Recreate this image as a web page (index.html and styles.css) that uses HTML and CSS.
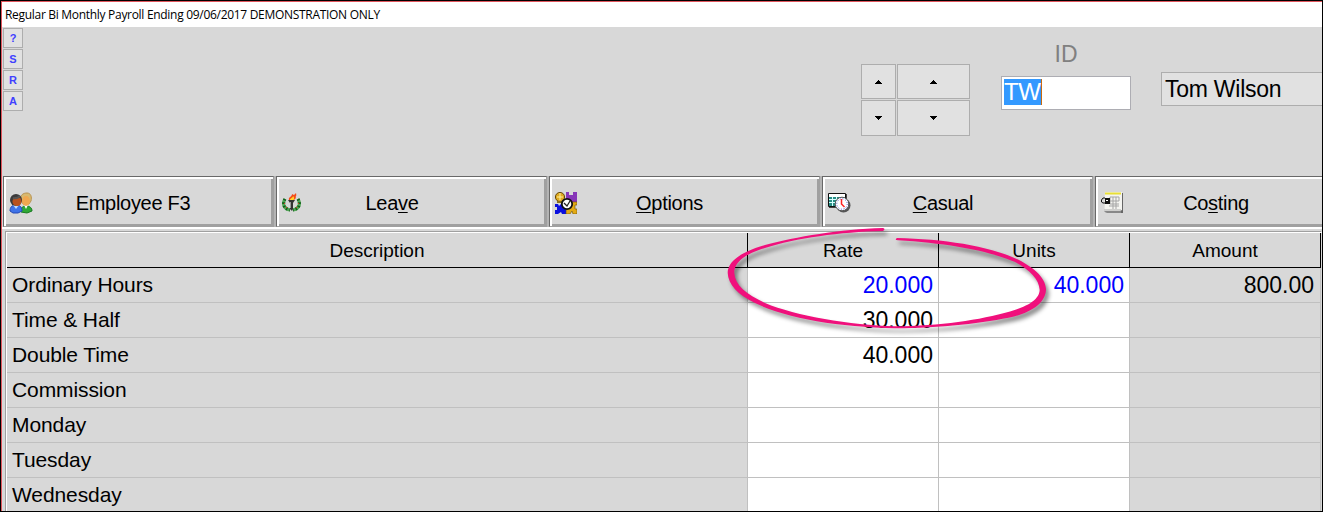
FILE: index.html
```
<!DOCTYPE html>
<html lang="en">
  <head>
    <meta charset="UTF-8" />
    <title>Regular Bi Monthly Payroll</title>
    <link rel="stylesheet" href="styles.css">
  </head>
  <body>
    <div class="window">
      <div class="title-bar"><span class="title">Regular Bi Monthly Payroll Ending 09/06/2017 DEMONSTRATION ONLY</span></div>

      <div class="top-panel">
        <div class="side-buttons">
          <button class="mini-btn">?</button>
          <button class="mini-btn">S</button>
          <button class="mini-btn">R</button>
          <button class="mini-btn">A</button>
        </div>
        <div class="nav-buttons">
          <button class="nav-btn"><svg width="7" height="4"><path d="M3 0h1v1h1v1h1v1h1v1H0V3h1V2h1V1h1z" /></svg></button>
          <button class="nav-btn"><svg width="7" height="4"><path d="M3 0h1v1h1v1h1v1h1v1H0V3h1V2h1V1h1z" /></svg></button>
          <button class="nav-btn"><svg width="7" height="4"><path d="M0 0h7v1H6v1H5v1H4v1H3V3H2V2H1V1H0z" /></svg></button>
          <button class="nav-btn"><svg width="7" height="4"><path d="M0 0h7v1H6v1H5v1H4v1H3V3H2V2H1V1H0z" /></svg></button>
        </div>
        <div class="id-field">
          <div class="id-label">ID</div>
          <div class="id-input"><span class="selected">TW</span></div>
        </div>
        <div class="name-box">Tom Wilson</div>
      </div>

      <!-- Tabs -->
      <div class="tabs">
        <div class="tab">
          <svg class="icon" width="24" height="22" viewBox="0 0 24 22">
            <path d="M12 20c0-4 1-6 5-6s6 2 6 5l-5 2z" fill="#2fa836" stroke="#177a20" />
            <path d="M15 13l2 4 2-4z" fill="#fff" />
            <path d="M12 8c-1-5 2-7 6-7s5 4 4 8l-2 3h-6z" fill="#d8b970" stroke="#b89250" />
            <ellipse cx="17" cy="9" rx="4" ry="5" fill="#f0a850" />
            <path d="M1 19c0-4 2-6 6-6s6 2 6 6l-4 2H4z" fill="#3f73e8" stroke="#2449b5" />
            <path d="M4 13l3 4 3-4z" fill="#bddcff" />
            <ellipse cx="7" cy="8" rx="6" ry="6" fill="#3b3b3b" />
            <ellipse cx="8" cy="9.500" rx="4.500" ry="4.500" fill="#b9521e" />
            <path d="M4 6c3 1 5 0 7-2" fill="none" stroke="#555" stroke-width="2" />
          </svg>
          <span class="tab-label">Employee F3</span>
        </div>
        <div class="tab">
          <svg class="icon" width="20" height="20" viewBox="0 0 20 20">
            <g fill="none">
              <path d="M3 6c-3 5-1 10 5 11M16 6c3 5 1 10-5 11" stroke="#4fa653" stroke-width="3.2" />
              <path d="M3 6c-3 5-1 10 5 11M16 6c3 5 1 10-5 11" stroke="#135f1c" stroke-width="3" stroke-dasharray="1.5 2" />
              <path d="M2 10l1 1M4 14l1 1M17 10l-1 1M15 14l-1 1" stroke="#d43a20" />
            </g>
            <path d="M6 7h7l-2 3v6l-1 2-2-2v-6z" fill="#333" />
            <path d="M8 9h1v6H8z" fill="#9a9a9a" />
            <path d="M7 7c-1-3 3-3 3-6l2 1 2-2c1 4-1 3 0 5l-2 2z" fill="#f34b19" />
            <path d="M8 7c0-2 3-2 3-4 2 2 1 4 0 4z" fill="#ffd52a" />
          </svg>
          <span class="tab-label leave">Lea<u>v</u>e</span>
        </div>
        <div class="tab">
          <svg class="icon" width="22" height="22" viewBox="0 0 22 22">
            <path d="M11 0h3v3h4V0h4v10H11z" fill="#8737b8" />
            <path d="M0 12h3l1 2 2-2h5v10H7l-1-2-3 2H0v-4h2v-3H0z" fill="#0b10df" />
            <path d="M12 10h10v3h-2v4h2v5h-4l-1-3-2 3h-4z" fill="#e3aa14" stroke="#6b5009" stroke-width=".6" />
            <circle cx="5" cy="5" r="4.6" fill="#dfaa20" stroke="#63480c" />
            <path d="M5 1v7M2 5h6" stroke="#fff0a0" />
            <path d="M2 10h7" stroke="#8a711d" stroke-width="2" />
            <circle cx="12" cy="12" r="5.2" fill="#fff" stroke="#111" stroke-width="1.8" />
            <path d="M9 11l3 3 3-5" fill="none" stroke="#222" stroke-width="1.3" />
          </svg>
          <span class="tab-label narrow"><u>O</u>ptions</span>
        </div>
        <div class="tab">
          <svg class="icon" width="23" height="20" viewBox="0 0 23 20">
            <path d="M1 1h18v14H1z" fill="#444" />
            <path d="M.5.5h17v13H.5z" fill="#fff" stroke="#111" />
            <path d="M1 4h16v9H1z" fill="#278d85" />
            <path d="M1 6.5h16M1 9.5h16M4.5 4v9M8.5 4v9" stroke="#d6ffff" />
            <circle cx="15.500" cy="12.500" r="7" fill="#555" />
            <circle cx="14" cy="11" r="6.8" fill="#fff" stroke="#555" />
            <circle cx="14" cy="11" r="5.2" fill="none" stroke="#4a50d0" stroke-dasharray="1 1.7" />
            <path d="M13.5 6v5l3 3" fill="none" stroke="#f22" stroke-width="1.5" />
          </svg>
          <span class="tab-label narrow"><u>C</u>asual</span>
        </div>
        <div class="tab">
          <svg class="icon" width="23" height="22" viewBox="0 0 23 22">
            <path d="M5 1h17v20H6l-3-2z" fill="#666" />
            <path d="M4 0h17v18l-2 1H3z" fill="#f4f4f0" />
            <path d="M4 1.5h16" stroke="#e8df35" stroke-width="2" />
            <path d="M3 18h17M4 20h16" stroke="#aaa" />
            <path d="M9 5h9v4H9zM12 5v12M15 5v12M9 9v3h9M8 14h10" fill="none" stroke="#a5a5a5" />
            <path d="M4 6h5v6H4z" fill="#111" />
            <path d="M4 6H2L.5 8v2L2 11h2M5 8h2" fill="none" stroke="#111" />
            <path d="M5 8.5h2" stroke="#fff" />
          </svg>
          <span class="tab-label narrow">Co<u>s</u>ting</span>
        </div>
      </div>

      <!-- Pay lines -->
      <div class="grid">
        <div class="head">Description</div><div class="head">Rate</div><div class="head">Units</div><div class="head">Amount</div>
        <div class="cell desc">Ordinary Hours</div><div class="cell edit blue">20.000</div><div class="cell edit blue">40.000</div><div class="cell amount">800.00</div>
        <div class="cell desc">Time &amp; Half</div><div class="cell edit">30.000</div><div class="cell edit"></div><div class="cell amount"></div>
        <div class="cell desc">Double Time</div><div class="cell edit">40.000</div><div class="cell edit"></div><div class="cell amount"></div>
        <div class="cell desc">Commission</div><div class="cell edit"></div><div class="cell edit"></div><div class="cell amount"></div>
        <div class="cell desc">Monday</div><div class="cell edit"></div><div class="cell edit"></div><div class="cell amount"></div>
        <div class="cell desc">Tuesday</div><div class="cell edit"></div><div class="cell edit"></div><div class="cell amount"></div>
        <div class="cell desc">Wednesday</div><div class="cell edit"></div><div class="cell edit"></div><div class="cell amount"></div>
      </div>
    </div>

    <!-- Hand drawn ring over the rate -->
    <svg class="ring" width="340" height="120" viewBox="720 220 340 120">
      <path d="M883 228C840 229 796 237 765 245C741 252 728 261 727.700 273C728 284 738 295 755 303C788 319 840 327 895 328.300C940 328 986 323 1014 316.500C1035 311 1046 301 1046 289C1045 276 1032 267 1019 260C990 246 944 239 897 238Q894 240 898 240.300C944 243 987 250 1015 262C1030 270 1039 279 1039.700 290C1039 301 1025 307 1010 311.500C980 320 940 326 895 326.300C850 325 796 316 765 303C746 294 735 285 734.300 273C734 261 748 253 765 248C796 238 840 232 883 231Q886 229 883 228z" />
    </svg>
  </body>
</html>
```
FILE: styles.css
```
* {
  box-sizing: border-box;
}

body {
  margin: 0;
  width: 1323px;
  height: 512px;
  overflow: hidden;
  position: relative;
  background: #d8d8d8;
  font-family: "Liberation Sans", Arial, sans-serif;
  color: #000;
}

.window {
  width: 1323px;
  height: 512px;
  border: 1px solid #000;
  overflow: hidden;
  box-shadow: inset 1px 1px #e0555c;
  padding: 1px 0 0 1px;
}

.title-bar {
  height: 25px;
  padding-left: 3px;
  background: #fff;
  font-family: "Open Sans", "Noto Sans", sans-serif;
  font-size: 12px;
  line-height: 25px;
  white-space: nowrap;
}

.title {
  letter-spacing: -0.3px;
}

.top-panel {
  display: flex;
  height: 149px;
  padding: 1px 0 0 1px;
}

.side-buttons {
  display: flex;
  flex-direction: column;
  gap: 1px;
}

.mini-btn,
.nav-btn {
  display: flex;
  align-items: center;
  justify-content: center;
  padding: 0;
  background: #e1e1e1;
  border: 1px solid #adadad;
}

.mini-btn {
  width: 20px;
  height: 20px;
  color: #4040ff;
  font: bold 11px "Liberation Sans", Arial, sans-serif;
}

.nav-buttons {
  display: grid;
  grid-template-columns: 35px 73px;
  grid-template-rows: 35px 36px;
  gap: 1px;
  margin: 36px 0 0 838px;
}

.id-field {
  width: 130px;
  margin: 12px 0 0 31px;
}

.id-label {
  height: 36px;
  line-height: 28px;
  text-align: center;
  font-size: 23px;
  color: #808080;
}

.id-input {
  height: 34px;
  padding: 2px;
  background: #fff;
  border: 1px solid #adadb3;
}

.selected {
  display: inline-block;
  width: 38px;
  height: 26px;
  line-height: 26px;
  background: #3399ff;
  border-right: 1px solid #c86a10;
  color: #fff;
  font-size: 24px;
  letter-spacing: -0.3px;
}

.name-box {
  flex: 1;
  height: 34px;
  margin: 44px 0 0 30px;
  padding-left: 3px;
  border: 1px solid #adadad;
  border-right: none;
  background: #e1e1e1;
  font-size: 23px;
  line-height: 32px;
  letter-spacing: -0.25px;
  white-space: nowrap;
}

/* Tabs */
.tabs {
  display: flex;
  gap: 2px;
  width: 1370px;
  height: 53px;
  padding-left: 1px;
  background: linear-gradient(#d8d8d8 51px, #fff 51px);
}

.tab {
  display: flex;
  align-items: center;
  width: 271px;
  height: 51px;
  padding: 3px 0 0 3px;
  border: 1px solid #696969;
  border-right-color: #a0a0a0;
  border-bottom-color: #a0a0a0;
  box-shadow: inset 2px 2px #fff, inset -2px -2px #a0a0a0, 2px 0 #b4b4b4;
}

.icon {
  flex: none;
  margin-left: 2px;
}

.tab-label {
  flex: 1;
  padding-right: 40px;
  text-align: center;
  font-size: 20px;
  line-height: 28px;
  letter-spacing: -0.3px;
}

.tab-label.narrow {
  padding-right: 57px;
}

.tab-label.leave {
  padding-right: 64px;
}

u {
  text-decoration-thickness: 1px;
  text-underline-offset: 2px;
}

/* Pay lines */
.grid {
  display: grid;
  grid-template-columns: 741px 191px 191px 191px;
  grid-template-rows: 35px;
  grid-auto-rows: 35px;
  margin: 3px 0 0 4px;
  border-top: 1px solid #fff;
  border-left: 1px solid #fff;
  box-shadow: -1px -1px #a0a0a0;
}

.head {
  border-right: 1px solid #000;
  border-bottom: 1px solid #000;
  text-align: center;
  font-size: 19px;
  line-height: 35px;
}

.cell {
  padding-right: 5px;
  border-right: 1px solid #c0c0c0;
  border-bottom: 1px solid #c0c0c0;
  text-align: right;
  font-size: 23px;
  line-height: 34px;
}

.amount {
  padding-right: 6px;
}

.desc {
  padding-left: 5px;
  text-align: left;
  font-size: 21px;
  letter-spacing: -0.1px;
}

.edit {
  background: #fff;
}

.blue {
  color: #00f;
}

/* Ring */
.ring {
  position: absolute;
  left: 720px;
  top: 220px;
  fill: #f0107c;
  filter: drop-shadow(3px 4px 2px rgba(0, 0, 0, 0.45));
}
```
